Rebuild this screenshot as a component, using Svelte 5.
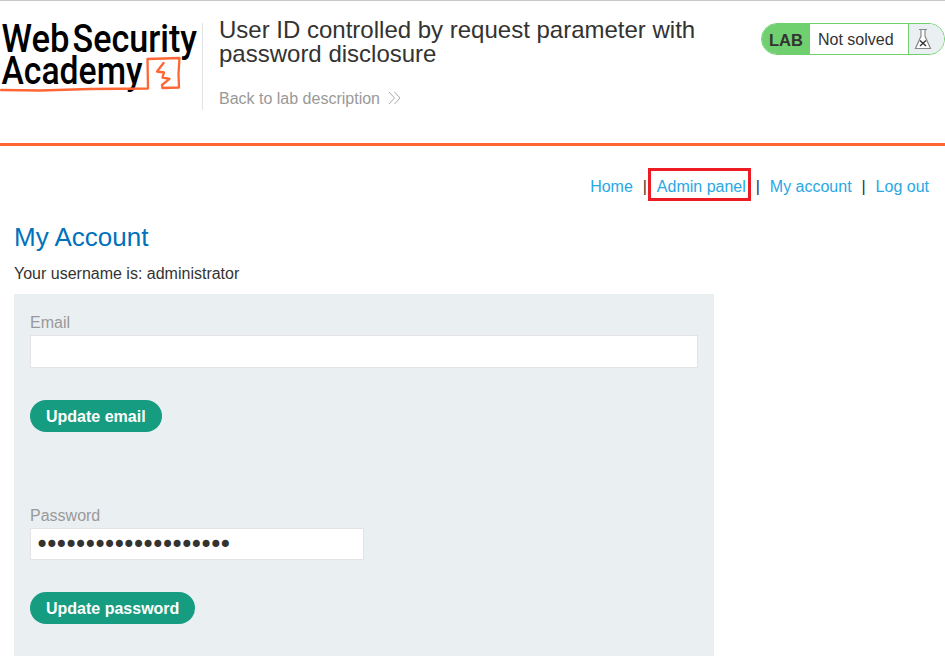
<script>
  let email = $state('');
  let password = $state('abcdefghijklmnopqrst');
</script>

<div class="page">
  <header>
    <svg class="logo" width="202" height="100" viewBox="0 0 202 100" role="img" aria-label="Web Security Academy">
      <g class="word">
        <text x="1.5" y="52" textLength="68" lengthAdjust="spacingAndGlyphs">Web</text>
        <text x="72.5" y="52" textLength="124.500" lengthAdjust="spacingAndGlyphs">Security</text>
        <text x="1.5" y="84.400" textLength="141" lengthAdjust="spacingAndGlyphs">Academy</text>
      </g>
      <path class="mark" d="M1 90 L40 90.500 L90 89 L148 88.500 L147.500 59 L179.500 58 L178.500 74 L179 87.500 L162.500 88 L162 85 L169.500 78.800 L162.500 77.500 L164 72.500 L157 71.500 L163.500 63" />
    </svg>
    <div class="title">
      <h2>User ID controlled by request parameter with password disclosure</h2>
      <a class="back" href="#lab">Back to lab description
        <svg width="14" height="14" viewBox="0 0 14 14"><path d="M1 1 L6.500 7 L1 13 M6.500 1 L12 7 L6.500 13" /></svg>
      </a>
    </div>
    <div class="status">
      <strong>LAB</strong><span>Not solved</span>
      <i><svg width="18" height="22" viewBox="0 0 18 22">
        <path class="flask" d="M5 1.500 H13 M7 2 V8 L1.500 20.500 H16.500 L11 8 V2" />
        <path class="cross" d="M6 12.500 L12 18 M12 12.500 L6 18" />
      </svg></i>
    </div>
  </header>

  <nav>
    <a href="#home">Home</a><b>|</b><a class="marked" href="#admin">Admin panel</a><b>|</b><a href="#account">My account</a><b>|</b><a href="#logout">Log out</a>
  </nav>

  <main>
    <h1>My Account</h1>
    <p>Your username is: administrator</p>
    <section>
      <label for="email">Email</label>
      <input id="email" type="text" bind:value={email} />
      <button>Update email</button>
      <label class="second" for="password">Password</label>
      <input id="password" type="password" bind:value={password} />
      <button>Update password</button>
    </section>
  </main>
</div>

<style>
  :global(body) { margin: 0; background: #fff; }
  .page {
    box-sizing: border-box;
    height: 665px;
    overflow: hidden;
    border-top: 1px solid #c8c8c8;
    font: 16px/20px "Liberation Sans", Arial, sans-serif;
    color: #333332;
  }
  header {
    box-sizing: border-box;
    display: flex;
    align-items: flex-start;
    height: 145px;
    border-bottom: 3px solid #ff6633;
  }
  .logo { display: block; flex: none; margin-top: -1px; overflow: visible; }
  .word { font: 500 38.5px Roboto, sans-serif; fill: #000; }
  .mark { fill: none; stroke: #ff6633; stroke-width: 2.3; stroke-linejoin: round; stroke-linecap: round; }
  .title {
    box-sizing: border-box;
    width: 510px;
    height: 87px;
    margin-top: 22px;
    padding-left: 16px;
    border-left: 1px solid #e3e3e5;
  }
  h2 { margin: -5px 0 0; font-size: 24px; line-height: 24px; font-weight: 400; }
  .back { display: flex; align-items: center; gap: 8px; margin-top: 23px; color: #999; text-decoration: none; }
  .back svg { margin-top: -2px; }
  .back path { fill: none; stroke: #aaa; stroke-width: 1; }
  .status {
    box-sizing: border-box;
    display: flex;
    width: 184px;
    height: 32px;
    margin: 22px 0 0 auto;
    border: 1px solid #70d070;
    border-radius: 16px;
    overflow: hidden;
    line-height: 32px;
  }
  .status strong { width: 41px; padding-left: 7px; background: #70d070; font-size: 16.500px; }
  .status span { width: 90px; padding-left: 8px; }
  .status i { flex: 1; background: #eaeff2; border-left: 1px solid #70d070; }
  .status svg { display: block; margin: 4px 0 0 5px; }
  .flask { fill: #fff; stroke: #888; stroke-width: 1.2; }
  .cross { fill: none; stroke: #333; stroke-width: 1.4; }
  nav { display: flex; justify-content: flex-end; align-items: center; height: 33px; padding: 22px 16px 0 0; color: #333; }
  nav a, nav b { padding-top: 5px; }
  nav a { color: #29a7e5; text-decoration: none; }
  nav b { width: 24px; text-align: center; font-weight: 400; }
  nav .marked { height: 27px; margin: 0 -5px 0 -9px; padding: 0 2px 0 6px; border: 3px solid #ed1c24; line-height: 31px; }
  main { padding: 20px 14px 0; }
  h1 { margin: 0; font-size: 26px; line-height: 32px; font-weight: 400; color: #0071bb; }
  p { margin: 11px 0 10px; }
  section { box-sizing: border-box; width: 700px; height: 362px; padding: 19px 16px 0; background: #eaeff2; }
  label { display: block; height: 22px; color: #999; }
  .second { margin-top: 74px; }
  input {
    box-sizing: border-box;
    display: block;
    width: 668px;
    height: 33px;
    padding: 0 7px;
    border: 1px solid #e3e3e5;
    border-radius: 0;
    outline: none;
    background: #fff;
    color: #333332;
    font: 16px "Liberation Sans", Arial, sans-serif;
  }
  #password { width: 334px; height: 32px; padding: 2px 4px 0; font: 24px "DejaVu Sans", sans-serif; letter-spacing: -4.510px; }
  button {
    display: block;
    height: 32px;
    margin: 32px 0 0;
    padding: 2px 16px 0;
    border: 0;
    border-radius: 16px;
    background: #169c80;
    color: #fff;
    font: bold 16px "Liberation Sans", Arial, sans-serif;
  }
</style>
